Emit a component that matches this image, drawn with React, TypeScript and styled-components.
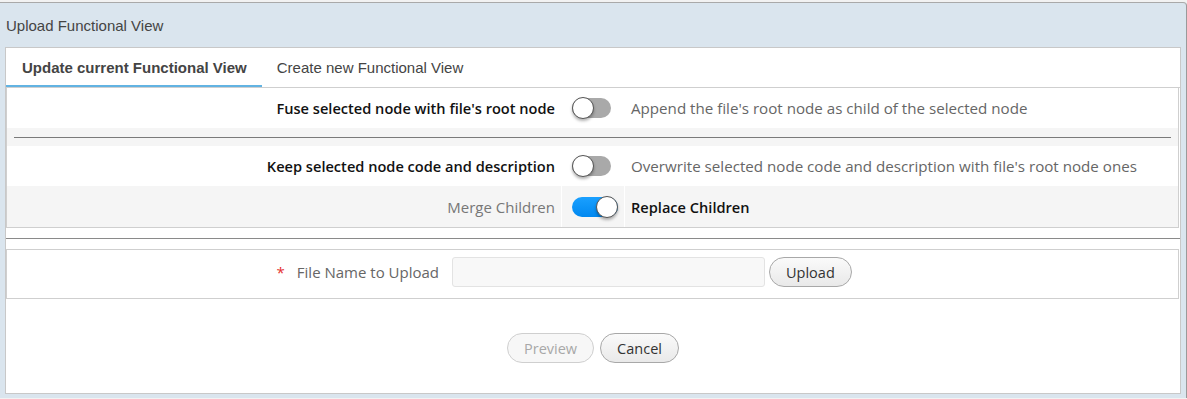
import React from "react";
import styled, { createGlobalStyle } from "styled-components";

const GlobalStyle = createGlobalStyle`
  html, body {
    margin: 0;
    padding: 0;
    background: #f2f2f2;
  }
  body {
    font-family: "Open Sans", "Liberation Sans", sans-serif;
    font-size: 15px;
  }
`;

type ToggleProps = { on?: boolean };

function Toggle({ on }: ToggleProps) {
  return (
    <Track on={on}>
      <Knob on={on} />
    </Track>
  );
}

type OptionRowProps = {
  label: string;
  description: string;
  on?: boolean;
  muted?: boolean;
  shaded?: boolean;
};

function OptionRow({ label, description, on, muted, shaded }: OptionRowProps) {
  return (
    <Row shaded={shaded}>
      <LabelCell muted={muted}>{label}</LabelCell>
      <ToggleCell shaded={shaded}>
        <Toggle on={on} />
      </ToggleCell>
      <DescCell strong={muted}>{description}</DescCell>
    </Row>
  );
}

export default function App() {
  return (
    <>
      <GlobalStyle />
      <Dialog>
        <Header>Upload Functional View</Header>
        <Content>
          <TabList>
            <Tab active>Update current Functional View</Tab>
            <Tab>Create new Functional View</Tab>
          </TabList>
          <OptionsPanel>
            <OptionRow
              label="Fuse selected node with file's root node"
              description="Append the file's root node as child of the selected node"
            />
            <SeparatorRow>
              <Rule />
            </SeparatorRow>
            <OptionRow
              label="Keep selected node code and description"
              description="Overwrite selected node code and description with file's root node ones"
            />
            <OptionRow
              label="Merge Children"
              description="Replace Children"
              on
              muted
              shaded
            />
          </OptionsPanel>
          <SectionRule />
          <UploadPanel>
            <FieldLabel>
              <Required>*</Required>File Name to Upload
            </FieldLabel>
            <FileInput type="text" readOnly />
            <Button>Upload</Button>
          </UploadPanel>
          <Footer>
            <Button disabled>Preview</Button>
            <Button>Cancel</Button>
          </Footer>
        </Content>
      </Dialog>
    </>
  );
}

const Dialog = styled.div`
  margin-top: 2px;
  height: 396px;
  background: #dae5ee;
  border-top: 1px solid #a9a9a9;
  border-right: 1px solid #9a9a9a;
  border-top-right-radius: 4px;
  box-sizing: border-box;
  padding: 0 5px 0 5px;
  display: flex;
  flex-direction: column;
`;

const Header = styled.div`
  height: 44px;
  margin-left: -5px;
  padding-left: 6px;
  display: flex;
  align-items: center;
  font-family: "Liberation Sans", Arial, sans-serif;
  font-size: 15px;
  color: #444;
`;

const Content = styled.div`
  background: #fff;
  border: 1px solid #c8c8c8;
  height: 347px;
  box-sizing: border-box;
  display: flex;
  flex-direction: column;
`;

const TabList = styled.div`
  display: flex;
  height: 40px;
  box-sizing: border-box;
  border-bottom: 1px solid #cfcfcf;
`;

const Tab = styled.div<{ active?: boolean }>`
  height: 39px;
  box-sizing: border-box;
  padding: ${p => (p.active ? "1px 15px 0 16px" : "1px 15px 0")};
  display: flex;
  align-items: center;
  font-family: "Liberation Sans", Arial, sans-serif;
  font-size: 15px;
  font-weight: ${p => (p.active ? 700 : 400)};
  color: #444;
  border-bottom: 2px solid ${p => (p.active ? "#62b3e2" : "transparent")};
`;

const OptionsPanel = styled.div`
  border: 1px solid #cfcfcf;
  border-top: none;
  margin-right: 1px;
`;

const Row = styled.div<{ shaded?: boolean }>`
  display: grid;
  grid-template-columns: 554px 64px 1fr;
  height: ${p => (p.shaded ? "41px" : "40px")};
  background: ${p => (p.shaded ? "#f5f5f5" : "#fff")};
`;

const LabelCell = styled.div<{ muted?: boolean }>`
  display: flex;
  align-items: center;
  justify-content: flex-end;
  padding-right: 6px;
  font-size: ${p => (p.muted ? "15px" : "14.6px")};
  font-weight: ${p => (p.muted ? 400 : 600)};
  color: ${p => (p.muted ? "#777" : "#111")};
  white-space: nowrap;
`;

const ToggleCell = styled.div<{ shaded?: boolean }>`
  display: flex;
  align-items: center;
  padding-left: 10px;
  border-left: 1px solid ${p => (p.shaded ? "#fff" : "transparent")};
  border-right: 1px solid ${p => (p.shaded ? "#fff" : "transparent")};
`;

const DescCell = styled.div<{ strong?: boolean }>`
  display: flex;
  align-items: center;
  padding-left: 6px;
  font-size: ${p => (p.strong ? "14.6px" : "15.15px")};
  font-weight: ${p => (p.strong ? 600 : 400)};
  color: ${p => (p.strong ? "#111" : "#666")};
  white-space: nowrap;
`;

const SeparatorRow = styled.div`
  height: 18px;
  background: #f5f5f5;
  display: flex;
  align-items: center;
  padding: 0 7px;
`;

const Rule = styled.div`
  flex: 1;
  height: 1px;
  background: #7a7a7a;
`;

const Track = styled.div<{ on?: boolean }>`
  position: relative;
  width: ${p => (p.on ? "46px" : "39px")};
  height: 20px;
  border-radius: 10px;
  background: ${p => (p.on ? "linear-gradient(#1aa0ff, #0088f0)" : "#a9a9a9")};
`;

const Knob = styled.div<{ on?: boolean }>`
  position: absolute;
  top: -1px;
  left: ${p => (p.on ? "24px" : "0")};
  width: 20px;
  height: 20px;
  border-radius: 50%;
  background: #fff;
  border: 1px solid #555;
  box-shadow: 0 2px 3px rgba(0, 0, 0, 0.3);
`;

const SectionRule = styled.div`
  height: 1px;
  background: #8a8a8a;
  margin: 10px 0 10px 0;
`;

const UploadPanel = styled.div`
  height: 50px;
  box-sizing: border-box;
  border: 1px solid #cfcfcf;
  margin-right: 1px;
  padding-top: 7px;
  display: flex;
  align-items: flex-start;
`;

const FieldLabel = styled.div`
  width: 432px;
  height: 30px;
  box-sizing: border-box;
  display: flex;
  align-items: center;
  justify-content: flex-end;
  color: #666;
  font-size: 15px;
  white-space: nowrap;
`;

const Required = styled.span`
  color: #e53030;
  margin-right: 12px;
`;

const FileInput = styled.input`
  margin-left: 13px;
  width: 313px;
  height: 30px;
  box-sizing: border-box;
  background: #f8f8f8;
  border: 1px solid #e3e3e3;
  border-radius: 3px;
  outline: none;
`;

const Button = styled.button`
  margin-left: 4px;
  height: 30px;
  padding: 0 16px;
  border-radius: 15px;
  border: 1px solid ${p => (p.disabled ? "#cfcfcf" : "#a8a8a8")};
  background: ${p => (p.disabled ? "#f7f7f7" : "linear-gradient(#fafafa, #e9e9e9)")};
  color: ${p => (p.disabled ? "#a8a8a8" : "#333")};
  font-family: "Open Sans", "Liberation Sans", sans-serif;
  font-size: 14.5px;
`;

const Footer = styled.div`
  display: flex;
  justify-content: center;
  gap: 2px;
  margin-top: 34px;
  margin-left: -4px;
`;
